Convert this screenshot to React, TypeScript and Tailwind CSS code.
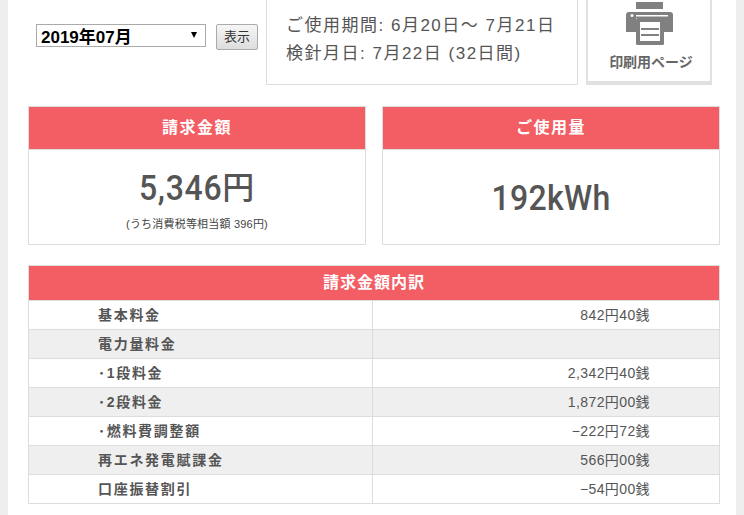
const rows = [
  { label: '基本料金', value: '842円40銭' },
  { label: '電力量料金', value: '' },
  { label: '･1段料金', value: '2,342円40銭' },
  { label: '･2段料金', value: '1,872円00銭' },
  { label: '･燃料費調整額', value: '−222円72銭' },
  { label: '再エネ発電賦課金', value: '566円00銭' },
  { label: '口座振替割引', value: '−54円00銭' },
];

const font = "font-['Liberation_Sans','Noto_Sans_CJK_JP',sans-serif]";

function PrinterIcon() {
  return (
    <svg width="48" height="44" viewBox="0 0 48 44" className="block ml-[1px]">
      <rect x="10" y="0" width="27" height="7" fill="#808080" />
      <path d="M3 10h41a3 3 0 0 1 3 3v17h-10v-14h-27v14h-10v-17a3 3 0 0 1 3-3z" fill="#808080" />
      <rect x="10" y="13" width="32" height="1.5" fill="#fff" />
      <circle cx="6" cy="13.5" r="1.5" fill="#fff" />
      <rect x="10" y="16" width="28" height="27" rx="1.5" fill="#808080" />
      <rect x="14" y="20" width="20" height="19" fill="#fff" />
      <rect x="15" y="26" width="18" height="2" fill="#808080" />
      <rect x="15" y="32" width="18" height="2" fill="#808080" />
    </svg>
  );
}

function SummaryCard({ title, children }: { title: string; children: React.ReactNode }) {
  return (
    <div className="w-[338px] h-[139px] shrink-0 border border-[#ddd] bg-white">
      <div className="h-[43px] bg-[#f35e64] border-b border-[#ddd] text-white text-[16px] font-bold tracking-[1.5px] flex items-center justify-center">
        {title}
      </div>
      {children}
    </div>
  );
}

export default function App() {
  return (
    <div className={`min-h-[515px] bg-[#eee] px-2 ${font}`}>
      <div className="h-[515px] bg-white overflow-hidden">
        {/* top row */}
        <div className="flex h-[85px]">
          <div className="w-[250px] shrink-0 flex items-start pt-6 pl-7">
            <div className="relative w-[170px] h-[23px] shrink-0">
              <select
                defaultValue="2019-07"
                className={`w-full h-full appearance-none border border-[#aaa] bg-white pl-1 pt-[3px] text-[17px] leading-5 font-bold text-black ${font}`}
              >
                <option value="2019-07">2019年07月</option>
              </select>
              <span className="absolute right-[9px] top-[8px] w-0 h-0 border-x-[3.5px] border-x-transparent border-t-[6px] border-t-black" />
            </div>
            <button className="ml-2.5 w-[42px] h-[26px] shrink-0 border border-[#aaa] rounded-[2px] bg-gradient-to-b from-[#f6f6f6] to-[#ddd] text-[13px] text-[#333]">
              表示
            </button>
          </div>
          <div className="ml-2 w-[312px] shrink-0 border-x border-b border-[#ddd] pl-[19px] pt-[12px] text-[#555] text-[17px] leading-[28px] tracking-[1.5px] whitespace-nowrap">
            <p>ご使用期間: 6月20日～ 7月21日</p>
            <p>検針月日: 7月22日 (32日間)</p>
          </div>
          <div className="ml-2 w-[126px] shrink-0 border-x-[2px] border-b-[4px] border-[#e0e0e0] flex flex-col items-center pt-0.5">
            <PrinterIcon />
            <span className="mt-[8px] ml-1 text-[14px] font-bold text-[#666] leading-4">印刷用ページ</span>
          </div>
        </div>

        {/* summary cards */}
        <div className="flex gap-4 px-5 mt-[21px]">
          <SummaryCard title="請求金額">
            <div className="flex flex-col items-center pt-[16px]">
              <p className="text-[32px] leading-[44px] font-medium text-[#555] tracking-[0.7px] font-['Roboto','Noto_Sans_CJK_JP',sans-serif]">
                <span className="inline-block scale-y-[1.12]">5,346</span>円
              </p>
              <p className="mt-[6px] text-[11px] leading-4 tracking-[0.2px] text-[#444]">(うち消費税等相当額 396円)</p>
            </div>
          </SummaryCard>
          <SummaryCard title="ご使用量">
            <div className="flex justify-center pt-[26px]">
              <p className="text-[32px] leading-[44px] font-medium text-[#555] tracking-[0.3px] scale-y-[1.12] font-['Roboto','Noto_Sans_CJK_JP',sans-serif]">192kWh</p>
            </div>
          </SummaryCard>
        </div>

        {/* breakdown table */}
        <div className="mx-5 mt-5 w-[692px] border border-[#ddd]">
          <div className="h-[35px] bg-[#f35e64] border-b border-[#ddd] text-white text-[16px] font-bold tracking-[1px] flex items-center justify-center">
            請求金額内訳
          </div>
          {rows.map((row, i) => (
            <div
              key={row.label}
              className={`flex ${i < rows.length - 1 ? 'h-[29px] border-b border-[#ddd]' : 'h-[28px]'} ${i % 2 === 1 ? 'bg-[#efefef]' : 'bg-white'}`}
            >
              <div className="w-[343px] pl-[69px] flex items-center text-[14px] font-bold text-[#555] tracking-[1.7px]">
                {row.label}
              </div>
              <div className="flex-1 border-l border-[#ddd] pr-[69px] flex items-center justify-end text-[14px] tracking-[0.4px] text-[#555]">
                {row.value}
              </div>
            </div>
          ))}
        </div>
      </div>
    </div>
  );
}
